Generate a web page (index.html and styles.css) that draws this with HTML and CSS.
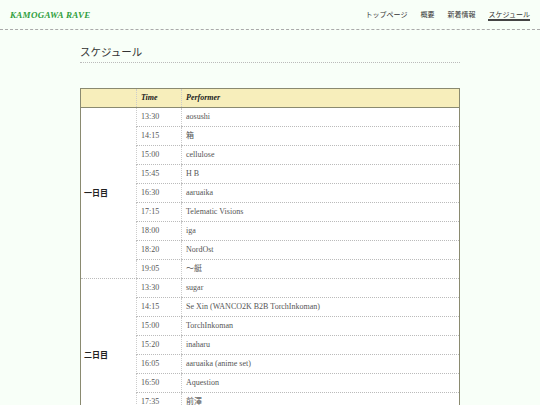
FILE: index.html
```html
<!DOCTYPE html>
<html lang="ja">
<head>
    <meta charset="UTF-8">
    <meta name="viewport" content="width=device-width, initial-scale=1.0">
    <title>スケジュール - KAMOGAWA RAVE</title>
    <link rel="stylesheet" href="styles.css">
</head>
<body>
    <header class="site-header">
        <a class="logo" href="#">KAMOGAWA RAVE</a>
        <nav class="nav">
            <a href="#">トップページ</a>
            <a href="#">概要</a>
            <a href="#">新着情報</a>
            <a href="#" class="active">スケジュール</a>
        </nav>
    </header>

    <main class="container">
        <h2 class="page-title">スケジュール</h2>

        <table class="schedule">
            <thead>
                <tr>
                    <th class="day-col"></th>
                    <th class="time-col">Time</th>
                    <th>Performer</th>
                </tr>
            </thead>
            <tbody>
                <tr><td class="day" rowspan="9">一日目</td><td>13:30</td><td>aosushi</td></tr>
                <tr><td>14:15</td><td>箱</td></tr>
                <tr><td>15:00</td><td>cellulose</td></tr>
                <tr><td>15:45</td><td>H B</td></tr>
                <tr><td>16:30</td><td>aaruaika</td></tr>
                <tr><td>17:15</td><td>Telematic Visions</td></tr>
                <tr><td>18:00</td><td>iga</td></tr>
                <tr><td>18:20</td><td>NordOst</td></tr>
                <tr><td>19:05</td><td>〜艇</td></tr>

                <tr><td class="day" rowspan="8">二日目</td><td>13:30</td><td>sugar</td></tr>
                <tr><td>14:15</td><td>Se Xin (WANCO2K B2B TorchInkoman)</td></tr>
                <tr><td>15:00</td><td>TorchInkoman</td></tr>
                <tr><td>15:20</td><td>inaharu</td></tr>
                <tr><td>16:05</td><td>aaruaika (anime set)</td></tr>
                <tr><td>16:50</td><td>Aquestion</td></tr>
                <tr><td>17:35</td><td>前澤</td></tr>
                <tr><td>18:20</td><td>sugar</td></tr>
            </tbody>
        </table>
    </main>
</body>
</html>
```

FILE: styles.css
```css
body {
    margin: 0;
    padding: 0;
    background-color: #f8fff8;
    font-family: "Liberation Serif", "Noto Sans CJK JP", serif;
    color: #333333;
}
a {
    text-decoration: none;
    color: inherit;
}
.site-header {
    display: flex;
    justify-content: space-between;
    align-items: center;
    height: 29px;
    padding: 0 10px;
    border-bottom: 1px dashed #aaaaaa;
}
.logo {
    font-family: "Liberation Serif", serif;
    font-style: italic;
    font-weight: bold;
    font-size: 9px;
    letter-spacing: 0.3px;
    color: #2f9e3c;
}
.nav {
    display: flex;
    gap: 13px;
    font-family: "Noto Sans CJK JP", sans-serif;
    font-size: 7px;
    line-height: 10px;
    color: #333333;
}
.nav a {
    padding-top: 1px;
    border-bottom: 2px solid transparent;
}
.nav a.active {
    border-bottom-color: #444444;
}
.container {
    width: 380px;
    margin: 0 auto;
    padding-top: 14px;
}
.page-title {
    margin: 0 0 25px;
    padding-bottom: 2px;
    font-family: "Noto Sans CJK JP", sans-serif;
    font-weight: normal;
    font-size: 10.5px;
    line-height: 16px;
    color: #333333;
    border-bottom: 1px dotted #bbbbbb;
}
.schedule {
    width: 100%;
    border-collapse: collapse;
    border: 1px solid #8a8a70;
    background-color: #ffffff;
    font-size: 8px;
    line-height: 10px;
}
.schedule th {
    height: 18px;
    padding: 0 4px;
    text-align: left;
    font-style: italic;
    font-weight: bold;
    color: #222222;
    background-color: #f7eebb;
    border-bottom: 1px solid #8a8a70;
    border-left: 1px dotted #cccccc;
}
.schedule td {
    height: 18px;
    padding: 0 4px;
    color: #555555;
    border-bottom: 1px dotted #bbbbbb;
    border-left: 1px dotted #cccccc;
}
.schedule .day-col {
    width: 47px;
}
.schedule .time-col {
    width: 36px;
}
.schedule td.day {
    padding-left: 3px;
    font-family: "Noto Sans CJK JP", sans-serif;
    font-weight: bold;
    color: #222222;
}
```
